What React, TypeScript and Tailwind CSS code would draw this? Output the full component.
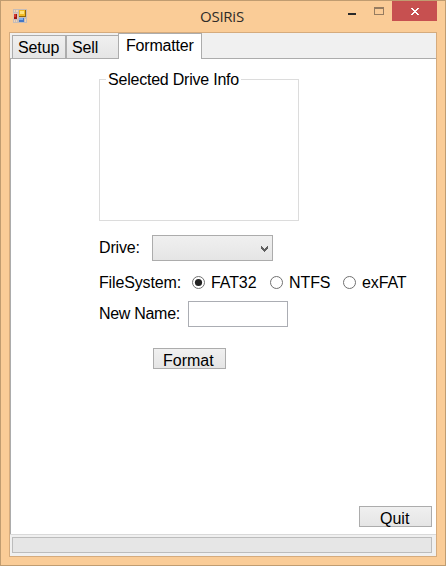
import type { ReactNode } from 'react';

function AppIcon() {
  return (
    <svg width="14" height="14" viewBox="0 0 14 14" shapeRendering="crispEdges" className="block">
      <rect width="14" height="14" fill="#c5bcb8" />
      <path d="M1 1h1v2H1zM3 1h2v2H3zM1 11h1v2H1zM3 11h1v2H3z" fill="#f3d3b2" />
      <rect x="0" y="4" width="5" height="6" fill="#d9c6bb" />
      <rect x="1" y="5" width="3" height="5" fill="#a01510" />
      <rect x="1" y="5" width="2" height="3" fill="#d2392f" />
      <rect x="6" y="1" width="7" height="7" fill="#936608" />
      <rect x="6" y="1" width="6" height="6" fill="#f1bb25" />
      <rect x="7" y="2" width="4" height="3" fill="#ffe27c" />
      <rect x="6" y="9" width="5" height="4" fill="#4377c6" />
      <rect x="6" y="9" width="4" height="2" fill="#7fb0ef" />
      <rect x="12" y="10" width="1" height="3" fill="#f3d3b2" />
    </svg>
  );
}

function TitleBar() {
  return (
    <header className="flex h-[31px] shrink-0 items-start">
      <div className="ml-3 mt-2 w-[150px]">
        <AppIcon />
      </div>
      <h1 className="mt-[5px] flex-1 pl-[37px] font-['Open_Sans','Noto_Sans',sans-serif] text-[15px] leading-5 tracking-[-0.25px] text-[#2f2c29]">
        OSIRiS
      </h1>
      <svg width="43" height="20" shapeRendering="crispEdges" className="mr-[6px] block">
        <rect x="5" y="12" width="8" height="2" fill="#292929" />
        <path d="M31 6h10v8H31zM32 8v5h8V8z" fillRule="evenodd" fill="#967c60" />
      </svg>
      <button className="mr-2 h-5 w-[45px] bg-[#c75050] pl-[19px]" aria-label="Close">
        <svg width="8" height="7" viewBox="0 0 8 7" shapeRendering="crispEdges" fill="#fff" className="block">
          <path d="M0 0h2v1H0zM6 0h2v1H6zM1 1h2v1H1zM5 1h2v1H5zM2 2h4v1H2zM3 3h2v1H3zM2 4h4v1H2zM1 5h2v1H1zM5 5h2v1H5zM0 6h2v1H0zM6 6h2v1H6z" />
        </svg>
      </button>
    </header>
  );
}

function Radio({ label, checked }: { label: string; checked?: boolean }) {
  return (
    <label className="flex items-center">
      <svg width="13" height="13" viewBox="0 0 13 13" className="block shrink-0">
        <circle cx="6.5" cy="6.5" r="6" fill="#fff" stroke="#707070" />
        {checked && <circle cx="6.5" cy="6.5" r="3.6" fill="#212121" />}
      </svg>
      <span className="ml-[6px] pt-[2px] tracking-[-0.1px]">{label}</span>
    </label>
  );
}

function Button({ children, className }: { children: ReactNode; className: string }) {
  return (
    <button
      className={`flex shrink-0 border border-[#acacac] bg-linear-to-b from-[#f0f0f0] to-[#e5e5e5] leading-[18px] ${className}`}
    >
      {children}
    </button>
  );
}

export default function App() {
  return (
    <main className="flex h-[566px] w-[446px] flex-col border border-[#c09c70] bg-[#facc97] font-['Liberation_Sans',Arial,sans-serif] text-base leading-[18px] text-black">
      <TitleBar />
      <section className="ml-2 flex h-[525px] w-[428px] flex-col border border-[#d5ab7d] bg-[#f0f0f0]">
        <nav className="flex h-[26px] shrink-0 items-end">
          <div className="h-px w-[2px] bg-[#acacac]" />
          <div className="h-6 w-[54px] border border-[#acacac] bg-linear-to-b from-[#f0f0f0] to-[#e5e5e5] pl-[5px] pt-[3px] tracking-[-0.1px] whitespace-nowrap">
            Setup
          </div>
          <div className="h-6 w-[52px] border border-r-0 border-[#acacac] bg-linear-to-b from-[#f0f0f0] to-[#e5e5e5] pl-[5px] pt-[3px] tracking-[-0.15px]">
            Sell
          </div>
          <div className="h-[26px] w-[84px] border border-b-0 border-[#acacac] bg-white pl-[7px] pt-[3px] tracking-[-0.2px] whitespace-nowrap">
            Formatter
          </div>
          <div className="h-px flex-1 bg-[#acacac]" />
        </nav>

        <div className="flex h-[475px] shrink-0 flex-col border-l border-[#acacac] bg-white pl-[88px]">
          <fieldset className="mt-[11px] h-[151px] w-[200px] border border-[#dcdcdc] pl-[6px]">
            <legend className="h-[18px] px-[2px] pt-px tracking-[-0.22px] whitespace-nowrap">
              Selected Drive Info
            </legend>
          </fieldset>

          <div className="mt-[14px] flex h-[26px] items-center">
            <span className="w-[53px] tracking-[-0.15px]">Drive:</span>
            <div className="flex h-[26px] w-[121px] items-center justify-end border border-[#acacac] bg-linear-to-b from-[#f0f0f0] to-[#e5e5e5] pr-1">
              <svg width="7" height="6" viewBox="0 0 7 6" shapeRendering="crispEdges" className="mt-[2px]">
                <path d="M0 0h1v1h1v1h1v1h1V2h1V1h1V0h1v3H6v1H5v1H4v1H3V5H2V4H1V3H0z" fill="#606060" />
              </svg>
            </div>
          </div>

          <div className="mt-[11px] flex h-5 items-center whitespace-nowrap">
            <span className="w-[93px] pt-[2px] tracking-[-0.15px]">FileSystem:</span>
            <div className="w-[78px]">
              <Radio label="FAT32" checked />
            </div>
            <div className="w-[73px]">
              <Radio label="NTFS" />
            </div>
            <Radio label="exFAT" />
          </div>

          <div className="mt-[9px] flex h-[26px] items-center whitespace-nowrap">
            <span className="w-[89px] tracking-[-0.3px]">New Name:</span>
            <input className="h-[26px] w-[100px] border border-[#abadb3] bg-white px-1" />
          </div>

          <Button className="ml-[54px] mt-[21px] h-[21px] w-[73px] pl-[9px] pt-[3px]">Format</Button>
          <Button className="ml-[260px] mt-[137px] h-[21px] w-[73px] pl-[20px] pt-[3px]">Quit</Button>
        </div>

        <footer className="flex h-[22px] flex-col border-t border-[#d9d9d9] pl-[2px] pt-[2px]">
          <div className="h-4 w-[420px] border border-[#bcbcbc] bg-[#e6e6e6]" />
        </footer>
      </section>
    </main>
  );
}
